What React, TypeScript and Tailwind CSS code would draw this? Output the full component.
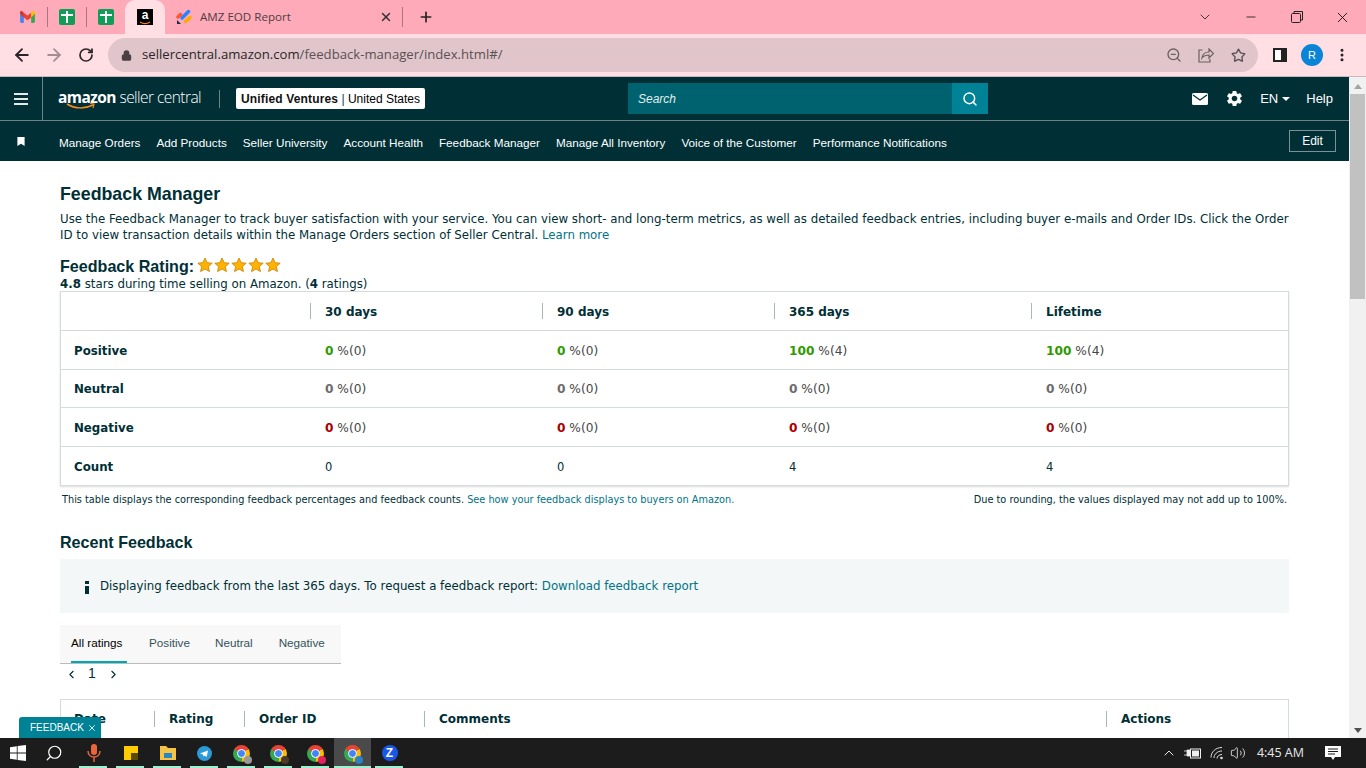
import React from "react";
import { ArrowLeft, ArrowRight, ChevronDown, ChevronLeft, ChevronRight, ChevronUp, Lock, Minus, MoreVertical, Plus, RotateCw, Search, Star, Volume2, X, ZoomOut } from "lucide-react";
import { MdSettings } from "react-icons/md";

const NAV = ["Manage Orders", "Add Products", "Seller University", "Account Health", "Feedback Manager", "Manage All Inventory", "Voice of the Customer", "Performance Notifications"];

type Row = { label: string; color: string; values: [string, string][] };

const ROWS: Row[] = [
  { label: "Positive", color: "text-[#2f9a00]", values: [["0", "0"], ["0", "0"], ["100", "4"], ["100", "4"]] },
  { label: "Neutral", color: "text-[#6c6c6c]", values: [["0", "0"], ["0", "0"], ["0", "0"], ["0", "0"]] },
  { label: "Negative", color: "text-[#a80000]", values: [["0", "0"], ["0", "0"], ["0", "0"], ["0", "0"]] },
];

const GRID = "grid grid-cols-[249px_232px_232px_257px_1fr]";

const PlusTile = () => (
  <svg width="16" height="16" viewBox="0 0 16 16">
    <rect width="16" height="16" rx="2" fill="#0f9d58" />
    <path d="M7 2h2v3h5v2H9v7H7V7H2V5h5z" fill="#fff" />
  </svg>
);

const Gmail = () => (
  <svg width="15" height="12" viewBox="0 0 16 13">
    <path d="M0 2v9.500A1.500 1.500 0 0 0 1.500 13H4V6z" fill="#4285f4" />
    <path d="M16 2v9.500a1.500 1.500 0 0 1-1.500 1.500H12V6z" fill="#34a853" />
    <path d="M4 7V2l4 3 4-3v5L8 10z" fill="#ea4335" />
    <path d="M0 3V1.500C0 .4 1.300-.3 2.300.4L4 2v5z" fill="#d93025" />
    <path d="M16 3V1.500c0-1.100-1.300-1.800-2.300-1.100L12 2v5z" fill="#fbbc04" />
  </svg>
);

const Chrome = ({ badge }: { badge: string }) => (
  <div className="relative w-[17px] h-[17px]">
    <div className="w-[17px] h-[17px] rounded-full bg-[conic-gradient(from_300deg,#ea4335_0_33%,#fbbc04_33%_66%,#34a853_66%_100%)] flex items-center justify-center">
      <div className="w-[9px] h-[9px] rounded-full bg-[#4285f4] border border-white" />
    </div>
    <div className="absolute right-[-2px] bottom-[-2px] w-2 h-2 rounded-full" style={{ backgroundColor: badge }} />
  </div>
);

const TaskIcon = ({ children, active }: { children: React.ReactNode; active?: boolean }) => (
  <div className={`relative w-[37px] h-[30px] flex items-center justify-center ${active ? "bg-[#4a4a4a]" : ""}`}>
    {children}
    <div className={`absolute bottom-0 h-[2px] bg-[#9ff0cf] ${active ? "left-0 right-0" : "left-[4px] right-[5px]"}`} />
  </div>
);

const Sep = () => <span className="absolute left-0 top-1/2 -translate-y-1/2 w-px h-[16px] bg-[#aab7b8]" />;

const Stars = () => (
  <span className="flex gap-[1px] ml-[3px] mt-[-3px]">
    {[0, 1, 2, 3, 4].map((i) => (
      <svg key={i} width="16" height="16" viewBox="0 0 24 24">
        <path d="M12 1.500l3.200 7 7.600.8-5.700 5.100 1.600 7.500L12 18l-6.700 3.900 1.600-7.500L1.200 9.300l7.600-.8z" fill="#ffb300" stroke="#c77f00" strokeWidth="1.200" />
      </svg>
    ))}
  </span>
);

export default function App() {
  return (
    <div className="w-[1366px] h-[768px] overflow-hidden flex flex-col bg-white font-['Liberation_Sans',sans-serif] relative">
      {/* browser tabs */}
      <div className="h-[34px] bg-[#ffaab8] flex items-center shrink-0 relative">
        <div className="w-[47px] flex justify-end pr-[12px]"><Gmail /></div>
        <div className="w-px h-[20px] bg-[#a5777f]" />
        <div className="w-[38px] flex justify-center"><PlusTile /></div>
        <div className="w-px h-[20px] bg-[#a5777f]" />
        <div className="w-[38px] flex justify-center"><PlusTile /></div>
        <div className="w-[40px] h-[34px] bg-[#ffdfe4] rounded-t-[10px] flex items-center justify-center">
          <div className="relative w-4 h-4 bg-black text-white text-[12px] font-bold leading-[13px] text-center">
            a
            <svg width="12" height="4" viewBox="0 0 12 4" className="absolute left-[2px] bottom-0"><path d="M1 1c3 2 7 2 10 0" fill="none" stroke="#f08c1e" strokeWidth="1.200" /></svg>
          </div>
        </div>
        <div className="w-[237px] flex items-center pl-[11px] pr-[9px]">
          <svg width="16" height="16" viewBox="0 0 16 16" className="mr-[8px]">
            <path d="M6 9l6.500-6.500" stroke="#2684ff" strokeWidth="3.500" strokeLinecap="round" />
            <path d="M2 8l2.500-2.500" stroke="#ff5630" strokeWidth="3.500" strokeLinecap="round" />
            <path d="M9.500 12.500L14 8.500" stroke="#ffab00" strokeWidth="3.500" strokeLinecap="round" />
            <path d="M1 11l4 4H1z" fill="#172b4d" />
          </svg>
          <span className="text-[11.6px] text-[#4a4043] font-['Open_Sans',sans-serif] flex-1">AMZ EOD Report</span>
          <X size={14} className="text-[#333]" strokeWidth={2.5} />
        </div>
        <div className="w-px h-[20px] bg-[#a5777f]" />
        <Plus size={16} strokeWidth={2.5} className="ml-[15px] text-[#222]" />
        <div className="ml-auto flex items-center text-[#222] pr-[15px]">
          <ChevronDown size={16} strokeWidth={1.3} className="mr-[31px]" />
          <Minus size={14} strokeWidth={1.5} className="mr-[33px]" />
          <svg width="12" height="12" viewBox="0 0 12 12" className="mr-[31px]">
            <rect x=".5" y="2.500" width="9" height="9" rx="1" fill="none" stroke="#222" />
            <path d="M3 2.500V.5h8.500V9H9.500" fill="none" stroke="#222" />
          </svg>
          <X size={17} strokeWidth={1.4} />
        </div>
      </div>

      {/* browser toolbar */}
      <div className="h-[43px] bg-[#ffdfe4] border-b border-[#c9b7bb] flex items-center shrink-0">
        <ArrowLeft size={20} strokeWidth={2.2} className="ml-[12px] text-[#2c2527]" />
        <ArrowRight size={20} strokeWidth={2.2} className="ml-[12px] text-[#a38f93]" />
        <RotateCw size={16} strokeWidth={2.6} className="ml-[14px] text-[#2c2527]" />
        <div className="ml-[14px] w-[1150px] h-[34px] rounded-full bg-[#e0c6ca] flex items-center pl-[13px] pr-[10px]">
          <Lock size={11} strokeWidth={2.5} className="text-[#4a4043] fill-[#4a4043]" />
          <span className="ml-[10px] text-[13.15px] font-['Open_Sans',sans-serif] text-[#5b5054]">
            <span className="text-[#2c2527]">sellercentral.amazon.com</span>/feedback-manager/index.html#/
          </span>
          <ZoomOut size={16} className="ml-auto text-[#6b5f62]" />
          <svg width="16" height="15" viewBox="0 0 16 15" className="ml-[16px]">
            <path d="M4.500 2H1v12h11v-3" fill="none" stroke="#6b5f62" strokeWidth="1.200" />
            <path d="M4 10c.500-4 3.500-6 7-6V1l4.500 4.500L11 10V7c-3 0-5.500 1-7 3z" fill="none" stroke="#6b5f62" strokeWidth="1.200" />
          </svg>
          <Star size={15} strokeWidth={2.2} className="ml-[17px] mr-[2px] text-[#5b5054]" />
        </div>
        <div className="ml-[15px] w-[14px] h-[14px] border-[2px] border-[#222] border-r-[6px] bg-white" />
        <div className="ml-[14px] w-[22px] h-[22px] rounded-full bg-[#0a84d6] text-white text-[11px] flex items-center justify-center">R</div>
        <MoreVertical size={16} strokeWidth={2.5} className="ml-[11px] text-[#222]" />
      </div>

      <div className="flex-1 flex min-h-0 relative">
        <div className="flex-1 min-w-0 overflow-hidden">
          {/* seller central header */}
          <div className="h-[44px] bg-[#002f36] border-b border-[#6f8286] flex items-center text-white relative">
            <div className="w-[43px] h-full border-r border-[#6f8286] flex flex-col items-center justify-center gap-[3px]">
              <div className="w-[14px] h-[2px] bg-[#e4e8e8]" />
              <div className="w-[14px] h-[2px] bg-[#e4e8e8]" />
              <div className="w-[14px] h-[2px] bg-[#e4e8e8]" />
            </div>
            <div className="ml-[15px] w-[145px] whitespace-nowrap relative font-['Open_Sans',sans-serif] text-[15.5px] leading-[20px] mt-[-4px] tracking-[-0.55px]">
              <span className="font-bold">amazon</span> <span className="font-light">seller central</span>
              <svg width="30" height="7" viewBox="0 0 30 7" className="absolute left-[8px] top-[16px]">
                <path d="M1 1c8 5 18 5 26 1" fill="none" stroke="#f08c1e" strokeWidth="1.500" />
                <path d="M24 .5l4 .5-1 4" fill="none" stroke="#f08c1e" strokeWidth="1.200" />
              </svg>
            </div>
            <div className="ml-[16px] w-px h-[18px] bg-[#6f8286]" />
            <div className="ml-[16px] h-[21px] w-[189px] bg-white rounded-[2px] text-black text-[12px] flex items-center justify-center whitespace-nowrap">
              <span className="font-bold text-[#111] tracking-[0.15px]">Unified Ventures</span>&nbsp;<span className="text-[#00464f]">|</span>&nbsp;United States
            </div>
            <div className="absolute left-[628px] top-[6px] w-[360px] h-[31px] flex">
              <div className="w-[324px] bg-[#00626e] text-[12px] italic text-[#e4eeef] flex items-center pl-[10px]">Search</div>
              <div className="w-[36px] bg-[#008296] flex items-center justify-center"><Search size={16} strokeWidth={2.2} /></div>
            </div>
            <div className="ml-auto flex items-center pr-[16px] text-[13px]">
              <svg width="16" height="12" viewBox="0 0 16 12" className="mr-[17px]">
                <rect width="16" height="12" rx="1.500" fill="#fff" />
                <path d="M1 2l7 5 7-5" fill="none" stroke="#002f36" strokeWidth="1.300" />
              </svg>
              <MdSettings size={19} className="mr-[16px]" />
              <span>EN</span>
              <span className="ml-[4px] w-0 h-0 border-x-[4px] border-x-transparent border-t-[4px] border-t-white" />
              <span className="ml-[16px]">Help</span>
            </div>
          </div>

          {/* nav */}
          <div className="h-[40px] bg-[#002f36] flex items-center text-white relative">
            <svg width="8" height="9" viewBox="0 0 8 10" className="absolute left-[17px] top-[16px]">
              <path d="M0 0h8v10L4 7.500 0 10z" fill="#fff" />
            </svg>
            <div className="ml-[59px] pt-[4px] flex gap-[16px] text-[11.73px] whitespace-nowrap">
              {NAV.map((n) => <span key={n}>{n}</span>)}
            </div>
            <div className="ml-auto mr-[13px] w-[47px] h-[22px] border border-[#7d9094] text-[12px] flex items-center justify-center mt-[-1px]">Edit</div>
          </div>

          {/* page */}
          <div className="px-[60px] font-['DejaVu_Sans',sans-serif] text-[#002f36]">
            <h1 className="mt-[22px] text-[17.8px] leading-[22px] font-bold font-['Liberation_Sans',sans-serif]">Feedback Manager</h1>
            <p className="mt-[6px] text-[11.8px] leading-[16px]">
              Use the Feedback Manager to track buyer satisfaction with your service. You can view short- and long-term metrics, as well as detailed feedback entries, including buyer e-mails and Order IDs. Click the Order ID to view transaction details within the Manage Orders section of Seller Central. <span className="text-[#007486]">Learn more</span>
            </p>
            <div className="mt-[14px] flex items-center h-[18px] text-[16.1px] font-bold font-['Liberation_Sans',sans-serif]">
              Feedback Rating:<Stars />
            </div>
            <p className="text-[11.8px] leading-[15px] mt-[2px]"><b>4.8</b> stars during time selling on Amazon. (<b>4</b> ratings)</p>

            <div className="mt-[-1px] border border-[#d5dbdb] shadow-[0_1px_2px_rgba(0,0,0,0.15)] text-[12px]">
              <div className={`${GRID} h-[39px] items-center font-bold border-b border-[#d5dbdb]`}>
                <div />
                {["30 days", "90 days", "365 days", "Lifetime"].map((h) => (
                  <div key={h} className="relative pl-[15px] leading-[20px]"><Sep /><span className="relative top-[1px]">{h}</span></div>
                ))}
              </div>
              {ROWS.map((r) => (
                <div key={r.label} className={`${GRID} h-[38.500px] items-center border-b border-[#d5dbdb] pt-[4px]`}>
                  <div className="pl-[13px] font-bold text-[11.8px]">{r.label}</div>
                  {r.values.map((v, i) => (
                    <div key={i} className="pl-[15px] text-[#444] text-[12.2px] mt-[-2px]"><b className={r.color}>{v[0]}</b> %({v[1]})</div>
                  ))}
                </div>
              ))}
              <div className={`${GRID} h-[38.500px] items-center pt-[4px]`}>
                <div className="pl-[13px] font-bold text-[11.8px]">Count</div>
                {["0", "0", "4", "4"].map((c, i) => <div key={i} className="pl-[15px] text-[11.5px]">{c}</div>)}
              </div>
            </div>

            <div className="mt-[8px] flex justify-between px-[2px] text-[9.75px] leading-[12px]">
              <span>This table displays the corresponding feedback percentages and feedback counts. <span className="text-[#007486]">See how your feedback displays to buyers on Amazon.</span></span>
              <span>Due to rounding, the values displayed may not add up to 100%.</span>
            </div>

            <h2 className="mt-[26px] text-[16.1px] leading-[20px] font-bold font-['Liberation_Sans',sans-serif]">Recent Feedback</h2>

            <div className="mt-[7px] h-[54px] bg-[#f3f7f7] flex items-center pl-[25px] pt-[2px] text-[11.8px]">
              <svg width="4" height="13" viewBox="0 0 4 13" className="mr-[11px]"><path d="M0 0h4v3H0zM0 5h4v8H0z" fill="#002f36" /></svg>
              Displaying feedback from the last 365 days. To request a feedback report:&nbsp;<span className="text-[#007486]">Download feedback report</span>
            </div>

            <div className="mt-[12px] w-[281px] h-[39px] bg-[#f8f8f8] border-b border-[#bbbbbb] flex font-['Liberation_Sans',sans-serif] text-[11.7px] text-[#33545a]">
              <div className="ml-[11px] w-[56px] h-full border-b-[2px] border-[#00a8b5] flex items-center text-black">All ratings</div>
              <div className="ml-[22px] pb-[2px] flex items-center">Positive</div>
              <div className="ml-[25px] pb-[2px] flex items-center">Neutral</div>
              <div className="ml-[26px] pb-[2px] flex items-center">Negative</div>
            </div>
            <div className="h-[20px] flex items-center text-[#002f36] font-['Liberation_Sans',sans-serif]">
              <ChevronLeft size={13} strokeWidth={2} className="ml-[5px]" />
              <span className="ml-[10px] text-[14px] mt-[-2px]">1</span>
              <ChevronRight size={13} strokeWidth={2} className="ml-[11px]" />
            </div>

            <div className="mt-[15px] h-[60px] border border-[#d5dbdb] grid grid-cols-[93px_90px_180px_682px_1fr] text-[12px] font-bold">
              {["Date", "Rating", "Order ID", "Comments", "Actions"].map((h, i) => (
                <div key={h} className={`relative h-[38px] flex items-center ${i === 0 ? "pl-[13px]" : "pl-[15px]"}`}>
                  {i > 0 && <Sep />}<span>{h}</span>
                </div>
              ))}
            </div>
          </div>
        </div>

        {/* scrollbar */}
        <div className="w-[17px] bg-[#f1f1f1] flex flex-col items-center shrink-0">
          <div className="mt-[7px] w-0 h-0 border-x-[4px] border-x-transparent border-b-[5px] border-b-[#a3a3a3]" />
          <div className="mt-[5px] w-[15px] h-[205px] bg-[#c1c1c1]" />
          <div className="mt-auto mb-[5px] w-0 h-0 border-x-[4px] border-x-transparent border-t-[5px] border-t-[#505050]" />
        </div>

        {/* feedback tab floats over the page */}
        <div className="absolute left-[19px] bottom-0 w-[82px] h-[21px] bg-[#008296] rounded-t-[3px] text-white text-[10px] flex items-center pl-[11px] gap-[3px]">
          FEEDBACK <X size={10} strokeWidth={2} />
        </div>
      </div>

      {/* windows taskbar */}
      <div className="h-[30px] bg-[#1c1c1c] flex items-center shrink-0 text-white relative">
        <svg width="16" height="16" viewBox="0 0 16 16" className="ml-[10px]">
          <path d="M0 2.200l6.800-1v6.300H0zM7.600 1.100L16 0v7.500H7.600zM0 8.400h6.800v6.400L0 13.800zM7.600 8.400H16V16l-8.400-1.100z" fill="#fff" />
        </svg>
        <Search size={18} strokeWidth={1.6} className="ml-[19px] mr-[12px] -scale-x-100" />
        <div className="flex">
          <TaskIcon>
            <svg width="14" height="18" viewBox="0 0 14 18"><rect x="4" width="6" height="11" rx="3" fill="#e8663d" /><path d="M1 7c0 8 12 8 12 0M7 13v5" stroke="#e8663d" strokeWidth="1.500" fill="none" /></svg>
          </TaskIcon>
          <TaskIcon><div className="w-[14px] h-[14px] bg-[#ffcc00]"><div className="ml-[7px] mt-[7px] w-[7px] h-[7px] bg-[#5c4a00]" /></div></TaskIcon>
          <TaskIcon>
            <svg width="16" height="14" viewBox="0 0 16 14"><path d="M0 0h6l2 2h8v12H0z" fill="#f6c445" /><rect x="4" y="7" width="8" height="5" fill="#2a83c6" /></svg>
          </TaskIcon>
          <TaskIcon>
            <svg width="15" height="15" viewBox="0 0 15 15"><circle cx="7.500" cy="7.500" r="7.500" fill="#2a9bd7" /><path d="M3 7.500l8-3-1.300 6.500-2.200-1.600-1.200 1.100-.3-2z" fill="#fff" /></svg>
          </TaskIcon>
          <TaskIcon><Chrome badge="#9a9a9a" /></TaskIcon>
          <TaskIcon><Chrome badge="#4a3a2a" /></TaskIcon>
          <TaskIcon><Chrome badge="#e0245e" /></TaskIcon>
          <TaskIcon active><Chrome badge="#2a83c6" /></TaskIcon>
          <TaskIcon>
            <div className="w-4 h-4 rounded-full bg-[#1a56e8] text-white text-[12px] font-bold flex items-center justify-center">Z</div>
          </TaskIcon>
        </div>
        <div className="ml-auto flex items-center text-[#e8e8e8]">
          <ChevronUp size={16} strokeWidth={1.5} className="mr-[7px]" />
          <svg width="17" height="11" viewBox="0 0 17 11" className="mr-[9px]"><path d="M0 3h3M0 7h3M3 2h3v6H3z" stroke="#eee" fill="#eee" strokeWidth=".8" /><rect x="6.500" y="1" width="10" height="9" fill="none" stroke="#eee" /><rect x="8" y="2.500" width="7" height="6" fill="#eee" /></svg>
          <svg width="14" height="14" viewBox="0 0 14 14" className="mr-[6px]" fill="none" stroke="#ddd" strokeWidth="1">
            <path d="M1 11.500C1 6 5.500 1.500 12 1.500" />
            <path d="M4 12c0-3.500 3-7 8-7" />
            <path d="M7 12.500c0-2 2-4 5-4" />
            <circle cx="11.500" cy="12" r="1.300" fill="#ddd" stroke="none" />
          </svg>
          <Volume2 size={16} strokeWidth={1.3} className="mr-[11px]" />
          <span className="text-[12.5px] font-['Open_Sans',sans-serif] mr-[21px]">4:45 AM</span>
          <svg width="16" height="16" viewBox="0 0 16 16" className="mr-[25px]">
            <path d="M0 1h16v11H10l-2 3-2-3H0z" fill="#fff" />
            <path d="M3 4h10M3 6.500h10M3 9h7" stroke="#1c1c1c" />
          </svg>
        </div>
      </div>
    </div>
  );
}
